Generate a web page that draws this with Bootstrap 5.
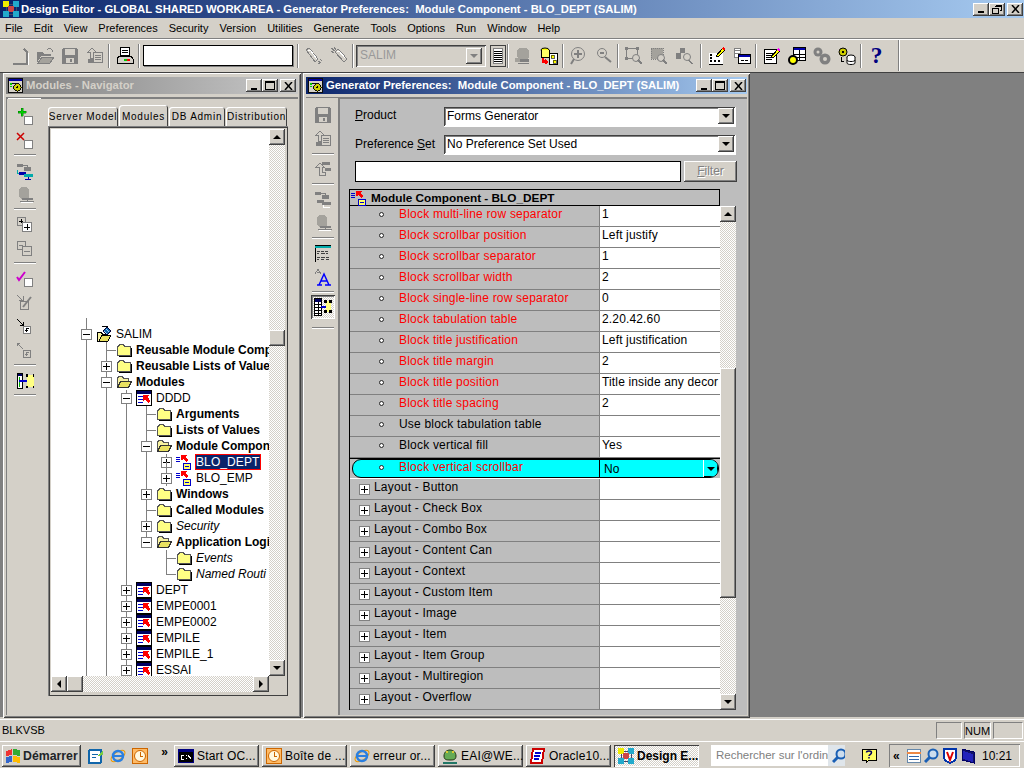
<!DOCTYPE html>
<html lang="en">
<head>
<meta charset="utf-8">
<title>Design Editor</title>
<link href="https://cdn.jsdelivr.net/npm/bootstrap@5.3.0/dist/css/bootstrap.min.css" rel="stylesheet">
<style>
:root{--c:#d4d0c8;--d:#808080;--p:#bdbdbd;--a:"Liberation Sans",sans-serif}
html,body{margin:0;height:768px;width:1024px;overflow:hidden}
body{background:var(--c);font:11.5px/1.2 var(--a);color:#000;display:flex;flex-direction:column}
svg{display:block;flex:none;shape-rendering:crispEdges}
.raised{background:var(--c);box-shadow:inset -1px -1px #404040,inset 1px 1px #fff,inset -2px -2px #808080}
.sunken{background:#fff;box-shadow:inset 1px 1px #404040,inset -1px -1px #fff,inset 2px 2px #808080}
.check{background:repeating-conic-gradient(#fff 0 25%,#d4d0c8 0 50%) 0 0/2px 2px}
.titlebar{height:18px;flex:none;background:linear-gradient(90deg,#0a246a,#a6caf0);color:#fff;font:700 11.3px/18px var(--a);padding-left:3px;gap:2px;white-space:pre}
.wb{width:16px;height:13px;flex:none;display:flex;align-items:center;justify-content:center}
.wbx{margin-left:2px;margin-right:1px}
.w-nav .wbx{margin-right:2px}
.menubar{height:21px;flex:none;border-bottom:1px solid #808080;box-shadow:0 1px #fff;padding-left:5px;font:11px/20px var(--a)}
.menubar span{margin-right:11px}
.toolbar{height:31px;flex:none;margin-top:1px;padding-left:7px;width:899px;border-right:1px solid #808080;box-shadow:1px 0 #fff;align-items:center}
.tb{width:25px;height:24px;flex:none;display:flex;align-items:center;justify-content:center}
.sep{width:2px;height:24px;flex:none;margin:0 2px 0 1px;border-left:1px solid #808080;border-right:1px solid #fff}
.qfield{width:150px;height:21px;margin-left:1px;background:#fff;border:1px solid #000;box-shadow:1px 1px #808080;flex:none}
.combo{width:130px;height:22px;flex:none;padding:3px 4px;font:12px/15px var(--a);color:#999;background:var(--c);box-shadow:inset 1px 1px #404040,inset -1px -1px #fff,inset 2px 2px #808080;display:flex;justify-content:space-between}
.sbtn{width:16px;height:16px;flex:none;display:flex;align-items:center;justify-content:center}
.tri-d{width:0;height:0;border:4px solid transparent;border-top:4px solid #000;border-bottom:0}
.tri-u{width:0;height:0;border:4px solid transparent;border-bottom:4px solid #000;border-top:0}
.tri-l{width:0;height:0;border:4px solid transparent;border-right:4px solid #000;border-left:0}
.tri-r{width:0;height:0;border:4px solid transparent;border-left:4px solid #000;border-right:0}
.tri-g{border-top-color:#808080}
.mdi{flex:1 1 auto;background:var(--d);position:relative;margin-top:1px;border-top:1px solid #404040}
.win{position:absolute;top:0;height:645px;background:var(--c);box-shadow:inset 1px 1px #fff,inset -1px -1px #404040,inset 2px 2px #d4d0c8,inset -2px -2px #808080;padding:4px 3px 3px;display:flex;flex-direction:column}
.w-nav{left:3px;width:298px}
.w-gen{left:303px;width:447px}
.wt{height:17px;flex:none;font:700 11.3px/17px var(--a);white-space:pre;padding-left:2px;gap:3px;margin-bottom:3px}
.wt-in{background:linear-gradient(90deg,#808080,#c8c8c8);color:#d4d0c8}
.wt-ac{background:linear-gradient(90deg,#0a246a,#a6caf0);color:#fff}
.wbody{flex:1 1 auto;display:flex;min-height:0;box-shadow:inset 1px 1px #808080;border-top:1px solid #808080}
.vbar{flex:none;padding-top:8px;display:flex;flex-direction:column;align-items:center;background:var(--c)}
.vbar .vt{height:24px;width:24px;flex:none;display:flex;align-items:center;justify-content:center}
.vsep{height:2px;flex:none;margin:2px 0;width:22px;border-top:1px solid #808080;border-bottom:1px solid #fff}
.nav-vbar{width:33px;padding-top:6px;margin-left:2px;border-right:0;border-top:1px solid #fff}
.nav-vbar .vsep{margin:1px 0 3px}
.navmain{flex:1 1 auto;padding:9px 10px 19px 7px;display:flex;flex-direction:column;min-width:0}
.nav.wtabs{border:0;gap:1px;height:19px;flex:none;flex-wrap:nowrap;padding-left:0}
.wtabs .nav-link{padding:0;height:19px;font:10px/19px var(--a);letter-spacing:.75px;color:#000;background:var(--c);border:0;border-radius:3px 3px 0 0;box-shadow:inset 1px 1px #fff,inset -1px 0 #404040;text-align:center;white-space:nowrap}
.wtabs .nav-link.active{height:21px;margin-top:-2px;line-height:23px;color:#000;background:var(--c);box-shadow:inset 1px 1px #fff,inset -1px 0 #404040}
.pane{flex:1 1 auto;box-shadow:inset 1px 1px #808080,inset -1px -1px #404040,inset 2px 2px #404040;padding:3px 3px 4px 3px;display:grid;grid-template-columns:1fr 16px;grid-template-rows:1fr 16px;min-height:0;background:var(--c)}
.tree{background:#fff;overflow:hidden;padding:197px 0 0 25px;font:12px/16px var(--a);white-space:nowrap}
.tr{height:16px;display:flex;align-items:center}
.c{width:20px;height:16px;flex:none;position:relative}
.c.v::before,.c.t::before,.c.l::before,.c.bx::before,.c.end::before{content:"";position:absolute;left:10px;top:0;bottom:0;width:1px;background:#808080}
.c.t::after,.c.l::after{content:"";position:absolute;left:10px;top:8px;width:10px;height:1px;background:#808080}
.c.l::before{bottom:8px}
.c.top::before{top:-8px}
.c.end::before{bottom:8px}
.c.bx b{position:absolute;left:5px;top:3px;width:11px;height:11px;border:1px solid #808080;background:linear-gradient(#000,#000) center/7px 1px no-repeat #fff}
.c.bx.pl b{background:linear-gradient(#000,#000) center/7px 1px no-repeat,linear-gradient(#000,#000) center/1px 7px no-repeat,#fff}
.ic{width:20px;flex:none;display:flex;justify-content:flex-start}
.fb{font-weight:700}
.fi{font-style:italic}
.hit{background:#0a246a;color:#fff;outline:1px solid #f00;outline-offset:-1px;padding:0 1px;margin-left:-1px;line-height:16px;letter-spacing:.1px}
.vtrack{display:flex;flex-direction:column}
.grow{flex:1 1 auto;min-height:0;min-width:0}
.grow-a{flex-grow:1.7}
.thumb{flex:none}
.htrack{display:flex;grid-column:1}
.genmain{flex:1 1 auto;background:var(--p);padding:9px 9px 6px 10px;display:flex;flex-direction:column;min-width:0;box-shadow:inset 1px 1px #808080}
.genbar{width:33px;box-shadow:inset -1px 0 #808080;padding-top:5px}
.fr{height:19px;align-items:center;margin-bottom:9px;padding-left:6px;flex:none;font:12px/19px var(--a)}
.fr label{width:89px;flex:none;margin-top:-2px}
.fr+.fr label{margin-top:0}
.fsel{width:292px;height:20px;background:#fff;box-shadow:inset 1px 1px #404040,inset -1px -1px #fff,inset 2px 2px #808080;padding:0 1px 0 3px;display:flex;justify-content:space-between;align-items:center;border-right:1px solid #fff;border-bottom:1px solid #fff}
.ffilter{height:21px;flex:none;padding-left:6px;margin-top:-2px;margin-bottom:7px;gap:3px}
.ffilter div{width:326px;background:#fff;border:1px solid #000}
.btn.filter{width:53px;height:21px;padding:0;border:0;border-radius:0;font:12px/21px var(--a);color:#808080;text-shadow:1px 1px #fff;--bs-btn-bg:#d4d0c8}
.grid-h{width:371px;height:17px;flex:none;border:1px solid #000;font:700 11.8px/16px var(--a);gap:4px;padding-left:1px}
.gridwrap{display:flex;flex:1 1 auto;min-height:0}
.grid{width:371px;flex:none;border-left:1px solid #000;font:12px/17px var(--a);letter-spacing:.2px;height:504px;overflow:hidden}
.row-x{height:21px;display:flex;overflow:hidden}
.row-x>.k{width:250px;flex:none;border-bottom:1px solid #808080;border-right:1px solid #808080;padding-left:49px;position:relative;line-height:16px;white-space:nowrap}
.row-x>.val{width:120px;flex:none;background:#fff;border-bottom:1px solid #808080;padding-left:2px;white-space:nowrap;overflow:hidden;line-height:17px;letter-spacing:.15px}
.red{color:#f00}
.dot{position:absolute;left:29px;top:6px;width:5px;height:5px;border-radius:50%;background:#fff;border:1px solid #222}
.row-x>.k.lay{padding-left:24px}
.k .pb{position:absolute;left:9px;top:5px;width:11px;height:11px;border:1px solid #808080;background:linear-gradient(#000,#000) center/7px 1px no-repeat,linear-gradient(#000,#000) center/1px 7px no-repeat,#fff}
.row-x.sel{height:21px;padding:0 1px 1px 2px;border-top:1px solid #000;border-bottom:1px solid #fff}
.pill{flex:1 1 auto;display:flex;background:#0ff;border:1px solid #000;border-radius:9px;overflow:hidden;height:19px}
.pill .k2{width:246px;flex:none;padding-left:46px;position:relative;line-height:14px;white-space:nowrap}
.pill .k2 .dot{left:26px;top:5px}
.pill .v2{flex:1 1 auto;border-left:1px solid #000;padding-left:4px;line-height:19px;display:flex;justify-content:space-between}
.pill .dd{width:15px;height:17px;background:#0ff;box-shadow:inset 1px 0 #fff,inset -1px -1px #000;display:flex;align-items:center;justify-content:center}
.gridbar{width:16px;flex:none;display:flex;flex-direction:column;height:504px}
.gridbar .thumb{height:230px;width:16px}
.g-a{flex-grow:146}
.g-b{flex-grow:96}
.t71{width:70px}.t49{width:49px}.t56{width:56px}.t61{width:61px}
.statusbar{height:22px;flex:none;margin-top:2px;border-top:1px solid #fff;padding:0 1px 0 2px;font:11px/19px var(--a);align-items:center;gap:2px}
.stc{height:17px;border:1px solid #808080;border-right-color:#fff;border-bottom-color:#fff;flex:none;text-align:center;line-height:16px}
.s26{width:26px}.s27{width:27px}.s30{width:30px}
.taskbar{height:27px;flex:none;box-shadow:inset 0 1px #fff;padding:2px 2px 0 2px;align-items:center;font:12px/1 var(--a)}
.start{width:79px;height:22px;flex:none;padding:0 3px;font:700 12.3px/22px var(--a);gap:2px;border:0;border-radius:0;--bs-btn-bg:#d4d0c8}
.ql{width:22px;height:20px;flex:none;display:flex;align-items:center;justify-content:center}
.ql-x{width:23px;font-weight:700;align-items:flex-start;padding-left:4px}
.task{width:85px;height:22px;flex:none;margin-right:3px;padding:0 4px;gap:3px;white-space:nowrap;overflow:hidden;letter-spacing:.2px}
.task.on{font-weight:700;letter-spacing:0;background:repeating-conic-gradient(#fff 0 25%,#d4d0c8 0 50%) 0 0/2px 2px;box-shadow:inset 1px 1px #404040,inset -1px -1px #fff}
.search{width:134px;height:21px;flex:none;background:#fff;margin-left:9px;color:#808080;font:11.5px/21px var(--a);display:flex;justify-content:space-between;padding-left:5px;overflow:hidden;white-space:nowrap}
.search i{width:23px;flex:none;background:#dfe5ea;display:flex;align-items:center;justify-content:center}
.hl{margin-left:13px}
.tray{width:131px;height:23px;flex:none;box-shadow:inset 1px 1px #808080,inset -1px -1px #fff;gap:2px;padding:0 8px 0 4px;margin-left:9px;align-items:center}
.qm{color:#000080;font-family:"Liberation Serif",serif}
</style>
</head>
<body>
<svg width="0" height="0" class="position-absolute">
<defs>
<symbol id="logo" viewBox="0 0 16 16"><path d="M3 3h10v10H3z" fill="none" stroke="#446"/><rect x="0" y="0" width="6" height="6" fill="#ee0"/><rect x="10" y="0" width="6" height="6" fill="#2ac"/><rect x="5" y="5" width="6" height="6" fill="#c44"/><rect x="0" y="10" width="6" height="6" fill="#2ac"/><rect x="10" y="10" width="6" height="6" fill="#2ac"/></symbol>
<symbol id="wgear" viewBox="0 0 16 16"><rect x=".5" y=".5" width="15" height="15" fill="#d4d0c8" stroke="#000"/><rect x="1" y="1" width="14" height="2" fill="#0000a0"/><rect x="2" y="5" width="2" height="2" fill="#0c0"/><rect x="2" y="8" width="2" height="2" fill="#0c0"/><path d="M4 6h4" stroke="#000"/><circle cx="10" cy="10" r="4" fill="#cc0" stroke="#000"/><circle cx="10" cy="10" r="1.2" fill="#000"/></symbol>
<symbol id="fo" viewBox="0 0 16 14"><path d="M1.500 3.500h1l1-2h4l1 2h5.500v9h-12.500z" fill="#ffff84" stroke="#555"/><path d="M15 4.500v9H3" fill="none" stroke="#000"/></symbol>
<symbol id="fopen" viewBox="0 0 16 14"><path d="M1.500 12V3.500l1-2h4l1 2h5v2" fill="#f7f2a0" stroke="#555"/><path d="M1.500 12.500l3-6h11l-3 6z" fill="#e8e060" stroke="#333"/></symbol>
<symbol id="mod" viewBox="0 0 16 16"><rect x=".5" y=".5" width="15" height="15" fill="#fff" stroke="#000"/><rect x="1" y="1" width="14" height="3" fill="#000060"/><path d="M2 6.500h5M2 9.500h5M2 12.500h5" stroke="#00c"/><path d="M7 5h6l-1.500 2 3 4-2.500 2-3-3.500-2 1.500z" fill="#f00"/></symbol>
<symbol id="comp" viewBox="0 0 16 16"><path d="M0 3.500h4M0 5.500h4M0 7.500h4" stroke="#00c"/><path d="M5 1h6l-1.500 2 3 3-2 2-3-3-2 1.500z" fill="#f00"/><rect x="7.500" y="9.500" width="7" height="6" fill="#ff6" stroke="#00c"/><path d="M9 12.500h4" stroke="#00c"/></symbol>
<symbol id="app" viewBox="0 0 16 16"><path d="M1.500 15V6.500h4l1 2h3v6.500z" fill="#f7f2a0" stroke="#000"/><path d="M3 15l3-6h9l-3 6z" fill="#e8e060" stroke="#000"/><path d="M7 5l4-4 4 4-4 4z" fill="#16a" stroke="#003"/><path d="M8 5l3 3M10 3l3 3" stroke="#9cf"/><path d="M6 .500h6" stroke="#000"/></symbol>
<symbol id="arrow-dia" viewBox="0 0 16 16"><rect x="1" y="1" width="5" height="14" fill="#fff" stroke="#000"/><path d="M2 2.500h3" stroke="#000060" stroke-width="2"/><path d="M3 4v9" stroke="#0a0"/><path d="M3 8h7" stroke="#00c"/><rect x="10" y="3" width="6" height="10" fill="#ffff84"/><path d="M9 2h2v2H9zM15 2h2v2h-2zM9 12h2v2H9zM15 12h2v2h-2z" fill="#000"/></symbol>
<symbol id="plus" viewBox="0 0 18 18"><path d="M3 3h2V0h2v3h3v2H7v3H5V5H2V3z" fill="#0c0" stroke="#060" stroke-width=".4"/><rect x="8.500" y="8.500" width="8" height="8" fill="#fff" stroke="#808080"/></symbol>
<symbol id="times" viewBox="0 0 18 18"><path d="M1 1l7 7M8 1L1 8" stroke="#c00" stroke-width="1.500" shape-rendering="auto"/><rect x="8.500" y="8.500" width="8" height="8" fill="#fff" stroke="#808080"/></symbol>
<symbol id="tree2" viewBox="0 0 18 18"><rect x="1" y="2" width="6" height="3" fill="#808080"/><path d="M7 3h4v4" stroke="#808080" fill="none"/><rect x="8" y="5" width="7" height="4" fill="#808080"/><rect x="3" y="10" width="7" height="3" fill="#00a"/><path d="M1 8v3h2" stroke="#0aa" fill="none"/><rect x="8" y="12" width="9" height="3" fill="#0aa"/><path d="M12 15v2h-3h6" stroke="#00a" fill="none"/></symbol>
<symbol id="treeg" viewBox="0 0 18 18"><rect x="1" y="2" width="6" height="3" fill="#808080"/><path d="M7 3h4v4" stroke="#808080" fill="none"/><rect x="8" y="5" width="7" height="4" fill="#808080"/><rect x="3" y="10" width="7" height="3" fill="#808080"/><rect x="8" y="12" width="9" height="3" fill="#808080"/><path d="M9 15v2h7" stroke="#fff" fill="none"/></symbol>
<symbol id="globe" viewBox="0 0 18 18"><path d="M5 1h6l2 3v7l-2 2H5L3 11V4z" fill="#a4a29c"/><rect x="6" y="12" width="11" height="2" fill="#808080"/><path d="M4 15h14M11 14v3" stroke="#808080"/><path d="M5 16h12" stroke="#fff"/></symbol>
<symbol id="boxplus" viewBox="0 0 18 18"><rect x="1.500" y="1.500" width="8" height="8" fill="none" stroke="#808080"/><rect x="6.500" y="6.500" width="9" height="9" fill="#fff" stroke="#808080"/><path d="M8 11h6M11 8v6" stroke="#000"/><path d="M3 5h4M5 3v4" stroke="#000"/></symbol>
<symbol id="boxminus" viewBox="0 0 18 18"><rect x="1.500" y="1.500" width="8" height="8" fill="none" stroke="#808080"/><rect x="6.500" y="6.500" width="9" height="9" fill="#d4d0c8" stroke="#808080"/><path d="M8 11h6" stroke="#808080"/><path d="M3 5h4" stroke="#808080"/></symbol>
<symbol id="check" viewBox="0 0 18 18"><path d="M1 7l2 3 6-8" stroke="#c0c" stroke-width="2" fill="none" shape-rendering="auto"/><rect x="8.500" y="8.500" width="8" height="8" fill="#fff" stroke="#808080"/></symbol>
<symbol id="checkg" viewBox="0 0 18 18"><path d="M1 1l5 5M3 6h4V2" stroke="#808080" fill="none"/><rect x="4.500" y="7.500" width="8" height="8" fill="#d4d0c8" stroke="#808080"/><path d="M7 13l8-10" stroke="#808080" stroke-width="2" shape-rendering="auto"/></symbol>
<symbol id="swin" viewBox="0 0 18 18"><path d="M1 1l6 6M4 7h3V4" stroke="#000" fill="none"/><rect x="7.500" y="8.500" width="7" height="7" fill="#fff" stroke="#808080"/><path d="M12.500 10h-2v4M9 12h3" stroke="#000" fill="none"/></symbol>
<symbol id="swing" viewBox="0 0 18 18"><path d="M7 7L1 1M1 4V1h3" stroke="#808080" fill="none"/><rect x="7.500" y="8.500" width="7" height="7" fill="#d4d0c8" stroke="#808080"/><path d="M12.500 10h-2v4M9 12h3" stroke="#808080" fill="none"/></symbol>
<symbol id="disk" viewBox="0 0 18 18"><path d="M2 1h13l2 2v14H1V2z" fill="#808080"/><rect x="4" y="2" width="10" height="6" fill="#d4d0c8"/><rect x="5" y="11" width="8" height="5" fill="#d4d0c8"/><rect x="9" y="12" width="2" height="3" fill="#808080"/></symbol>
<symbol id="revert" viewBox="0 0 18 18"><path d="M6 1l-4 4h2v6h4V5h2z" fill="#d4d0c8" stroke="#808080"/><rect x="7.500" y="5.500" width="9" height="10" fill="#d4d0c8" stroke="#808080"/><path d="M9 8h6M9 10h6M9 12h6" stroke="#808080"/><path d="M2 12h5v4H2z" fill="#808080"/></symbol>
<symbol id="updn" viewBox="0 0 18 18"><path d="M2 7l4-4 4 4H8v5h3v3H5V7z" fill="#d4d0c8" stroke="#808080"/><rect x="8" y="2" width="8" height="3" fill="#808080"/><rect x="11" y="8" width="6" height="3" fill="#808080"/></symbol>
<symbol id="new" viewBox="0 0 18 18"><path d="M2 17h14V5l-3-3" fill="none" stroke="#808080" stroke-width="1.500"/><path d="M3 18h14V6" fill="none" stroke="#fff"/></symbol>
<symbol id="openg" viewBox="0 0 18 18"><path d="M1 16V5h6l1 2h7v2H5L1 16z" fill="#808080"/><path d="M2 16l4-6h12l-4 6z" fill="#a4a29c" stroke="#808080"/><path d="M11 3c2-2 4-2 5 0l1 2" stroke="#808080" fill="none"/></symbol>
<symbol id="print" viewBox="0 0 18 18"><rect x="4.500" y=".5" width="9" height="8" fill="#fff" stroke="#000"/><path d="M6 3h6M6 5h6" stroke="#000"/><path d="M3 9h12l2 3v4H1v-4z" fill="#d4d0c8" stroke="#000"/><rect x="8" y="12" width="3" height="2" fill="#0c0"/><rect x="11" y="12" width="3" height="2" fill="#f00"/></symbol>
<symbol id="plug" viewBox="0 0 18 18"><path d="M1 3l3-2 9 11-3 3z" fill="#d4d0c8" stroke="#808080"/><path d="M3 4l2-1 7 9" stroke="#fff" fill="none"/><path d="M13 14l3 2M15 12l2 2M13 16l2 1" stroke="#808080"/></symbol>
<symbol id="plug2" viewBox="0 0 18 18"><path d="M5 5l3-3 9 10-3 3z" fill="#d4d0c8" stroke="#808080"/><path d="M7 5l2-1 6 7" stroke="#fff" fill="none"/><path d="M1 1l4 3M4 0l2 3M1 4l3 2" stroke="#808080"/></symbol>
<symbol id="list" viewBox="0 0 16 22"><rect x=".5" y=".5" width="15" height="21" fill="#d4d0c8" stroke="#404040"/><rect x="3.500" y="3.500" width="9" height="15" fill="#fff" stroke="#808080"/><path d="M4 6h8M4 8h8M4 10h8M4 12h8M4 14h8M4 16h8" stroke="#000"/></symbol>
<symbol id="dbg" viewBox="0 0 18 18"><path d="M4 1h8l2 3v6l-2 2H4L2 10V4z" fill="#a4a29c"/><rect x="0" y="11" width="7" height="4" fill="#a4a29c"/><rect x="5" y="12" width="9" height="3" fill="#808080"/><path d="M3 16h11" stroke="#808080"/></symbol>
<symbol id="dbc" viewBox="0 0 18 18"><ellipse cx="5" cy="3" rx="4" ry="2" fill="#ff0" stroke="#000" shape-rendering="auto"/><path d="M1 3v7h8V3" fill="#ff6" stroke="#000"/><path d="M3 11v4h4M5 13l2 2-2 2" stroke="#f00" stroke-width="1.500" fill="none"/><rect x="9.500" y="6.500" width="8" height="11" fill="#fff" stroke="#000"/><rect x="11" y="8" width="3" height="3" fill="#ff0" stroke="#000" stroke-width=".6"/><rect x="13" y="13" width="3" height="3" fill="#ff0" stroke="#000" stroke-width=".6"/></symbol>
<symbol id="zin" viewBox="0 0 18 18"><circle cx="8" cy="7" r="6.500" fill="#d4d0c8" stroke="#808080" shape-rendering="auto"/><path d="M4 7h8M8 3v8" stroke="#808080" stroke-width="2"/><path d="M4 12l-3 5" stroke="#808080" stroke-width="2" shape-rendering="auto"/></symbol>
<symbol id="zout" viewBox="0 0 18 18"><circle cx="7" cy="6" r="4.500" fill="#d4d0c8" stroke="#808080" shape-rendering="auto"/><path d="M5 6h4" stroke="#808080" stroke-width="1.500"/><path d="M10 10l6 5" stroke="#808080" stroke-width="2" shape-rendering="auto"/></symbol>
<symbol id="zbox" viewBox="0 0 18 18"><rect x="1.500" y="1.500" width="11" height="10" fill="none" stroke="#808080"/><path d="M0 0h3v3H0zM11 0h3v3h-3zM0 10h3v3H0z" fill="#808080"/><circle cx="11" cy="11" r="3.500" fill="#d4d0c8" stroke="#808080" shape-rendering="auto"/><path d="M13 13l4 4" stroke="#808080" stroke-width="1.500"/></symbol>
<symbol id="zdot" viewBox="0 0 18 18"><rect x="1" y="1" width="12" height="11" fill="#a4a29c" stroke="#808080" stroke-dasharray="1 1"/><circle cx="11" cy="11" r="3.500" fill="#d4d0c8" stroke="#808080" shape-rendering="auto"/><path d="M13 13l4 4" stroke="#808080" stroke-width="1.500"/></symbol>
<symbol id="zshape" viewBox="0 0 18 18"><rect x="1" y="6" width="5" height="6" fill="#808080"/><rect x="5" y="1" width="5" height="5" fill="#808080"/><circle cx="12" cy="10" r="3.500" fill="#d4d0c8" stroke="#808080" shape-rendering="auto"/><path d="M14 13l3 4" stroke="#808080" stroke-width="1.500"/></symbol>
<symbol id="pen" viewBox="0 0 18 18"><rect x="1.500" y="6.500" width="13" height="10" fill="#fff" stroke="#fff"/><path d="M2 14h2M6 14h2M10 14h2M2 11h2M2 8h2" stroke="#000" stroke-width="2"/><path d="M1 17h14" stroke="#000"/><path d="M8 9l7-8 2 2-7 7z" fill="#ff0" stroke="#000"/><path d="M15 1l2 2" stroke="#f00" stroke-width="2"/></symbol>
<symbol id="tblbox" viewBox="0 0 18 18"><path d="M1 1h6v9H1z" fill="#fff" stroke="#808080"/><path d="M1 3h6M1 6h6" stroke="#808080"/><rect x="5.500" y="7.500" width="12" height="9" fill="#fff" stroke="#000"/><rect x="6" y="8" width="11" height="2" fill="#00a"/><path d="M8 13h3M12 13h3" stroke="#000"/></symbol>
<symbol id="note" viewBox="0 0 18 18"><rect x="1.500" y="2.500" width="12" height="14" fill="#fff" stroke="#000"/><path d="M3 6h8M3 8h8M3 10h8M3 12h6" stroke="#000"/><path d="M8 10l7-8 2 2-7 7z" fill="#ff0" stroke="#000"/><path d="M15 2l2 2" stroke="#f0f" stroke-width="2"/></symbol>
<symbol id="tblring" viewBox="0 0 18 18"><rect x="5.500" y=".5" width="12" height="13" fill="#fff" stroke="#000"/><rect x="6" y="1" width="11" height="2" fill="#00a"/><path d="M6 7h11M6 10h11M11 3v10" stroke="#000"/><circle cx="5" cy="13" r="4" fill="#ff0" stroke="#000" stroke-width="2" shape-rendering="auto"/></symbol>
<symbol id="gears" viewBox="0 0 18 18"><circle cx="5" cy="5" r="4.500" fill="#808080" shape-rendering="auto"/><circle cx="5" cy="5" r="1.500" fill="#d4d0c8" shape-rendering="auto"/><circle cx="12" cy="12" r="5.500" fill="#808080" shape-rendering="auto"/><circle cx="12" cy="12" r="2" fill="#d4d0c8" shape-rendering="auto"/></symbol>
<symbol id="gdb" viewBox="0 0 18 18"><circle cx="5" cy="5" r="4" fill="#cc0" stroke="#000" shape-rendering="auto"/><circle cx="5" cy="5" r="1" fill="#000"/><path d="M3 10v4l3 1" stroke="#000" fill="none"/><ellipse cx="13" cy="10" rx="4" ry="2" fill="#fff" stroke="#000" shape-rendering="auto"/><path d="M9 10v6c0 2 8 2 8 0v-6M9 13c0 2 8 2 8 0" fill="#fff" stroke="#000" shape-rendering="auto"/></symbol>
<symbol id="tblhead" viewBox="0 0 18 18"><path d="M1.500 1v17" stroke="#000"/><rect x="1" y="1" width="16" height="3" fill="#0aa"/><path d="M1 1h16" stroke="#000"/><path d="M3 7h3M7 7h3M11 7h3M3 9h2M7 9h4M12 9h2M3 13h3M7 13h4M12 13h3M3 15h2M7 15h3M12 15h3" stroke="#404040"/></symbol>
<symbol id="fontA" viewBox="0 0 18 18"><path d="M1 6l3-5 3 5M2.500 4h3" stroke="#808080" fill="none"/><path d="M3 17h5M11 17h6M5 17l5-11 5 11M7 13h6" stroke="#00f" stroke-width="1.500" fill="none" shape-rendering="auto"/></symbol>
<symbol id="diag2" viewBox="0 0 18 18"><rect x=".5" y=".5" width="7" height="17" fill="#fff" stroke="#000"/><rect x="1" y="1" width="6" height="3" fill="#000060"/><path d="M1 6h6M1 9h6M1 12h6M1 15h6M4 4v13" stroke="#000"/><path d="M7 9h5" stroke="#00c" stroke-width="2"/><rect x="12" y="3" width="5" height="11" fill="#ffff84"/><path d="M10 2h3v3h-3zM15 2h3v3h-3zM10 12h3v3h-3zM15 12h3v3h-3z" fill="#000"/></symbol>
<symbol id="flag" viewBox="0 0 16 16"><path d="M1 3l6-2v6l-6 1z" fill="#e33"/><path d="M8 1l7 1v6L8 7z" fill="#3a3"/><path d="M1 9l6-1v6l-6 1z" fill="#36c"/><path d="M8 8l7 1v6l-7-1z" fill="#fb0"/></symbol>
<symbol id="ie" viewBox="0 0 16 16"><ellipse cx="8" cy="8" rx="8" ry="4" fill="none" stroke="#e90" transform="rotate(-35 8 8)" shape-rendering="auto"/><circle cx="8" cy="8" r="5" fill="none" stroke="#2a7fe0" stroke-width="2.500" shape-rendering="auto"/><path d="M4 8h9" stroke="#2a7fe0" stroke-width="1.500"/></symbol>
<symbol id="clock" viewBox="0 0 16 16"><rect x=".5" y=".5" width="15" height="15" fill="#fb6" stroke="#c60"/><circle cx="8" cy="8" r="5.500" fill="#fff8e0" stroke="#c60" shape-rendering="auto"/><path d="M8 4v4h3" stroke="#c60" fill="none"/></symbol>
<symbol id="mail" viewBox="0 0 16 16"><rect x="1" y="2" width="12" height="13" rx="1" fill="#fff" stroke="#16a" stroke-width="2"/><path d="M4 6h6M4 9h4" stroke="#16a"/><path d="M10 8l5-6v5z" fill="#7c4"/></symbol>
<symbol id="cmd" viewBox="0 0 16 16"><rect width="16" height="14" y="1" fill="#000080"/><rect x="1" y="4" width="14" height="10" fill="#000"/><path d="M3 7h3M3 11h3M3 7v4" stroke="#fff"/><path d="M8 7v1M8 10v1M10 7l3 4" stroke="#fff"/></symbol>
<symbol id="frog" viewBox="0 0 16 16"><path d="M2 8c0-4 3-6 6-6s6 2 6 6-3 4-6 4-6 0-6-4z" fill="#6a5" stroke="#231" shape-rendering="auto"/><circle cx="5" cy="4" r="1.500" fill="#dc3"/><circle cx="11" cy="4" r="1.500" fill="#dc3"/><path d="M1 14h14v2H1z" fill="#276"/></symbol>
<symbol id="oracle" viewBox="0 0 16 16"><path d="M3 1h11l-2 14H1z" fill="#fff" stroke="#c00" stroke-width="2"/><path d="M5 5h6M4 8h6M4 11h5" stroke="#00c" stroke-width="1.500"/></symbol>
<symbol id="lens" viewBox="0 0 16 16"><circle cx="9" cy="6" r="4.500" fill="#cde" stroke="#1a5fb4" stroke-width="2" shape-rendering="auto"/><path d="M6 9l-5 5" stroke="#1a5fb4" stroke-width="3" shape-rendering="auto"/></symbol>
<symbol id="hlp" viewBox="0 0 16 16"><path d="M1 1h14v11H8l-3 3v-3H1z" fill="#ff6" stroke="#000"/><path d="M5.500 4.500c0-2 5-2 5 0 0 2-2.500 2-2.500 3.500M8 9v1.500" stroke="#006" stroke-width="1.500" fill="none" shape-rendering="auto"/></symbol>
<symbol id="trayNote" viewBox="0 0 16 16"><rect x="1.500" y="1.500" width="13" height="13" fill="#fff" stroke="#68a"/><path d="M1 5h14" stroke="#e84" stroke-width="2"/><path d="M3 8h10M3 11h10" stroke="#36a"/></symbol>
<symbol id="shield" viewBox="0 0 16 16"><path d="M2 1h12v8c0 3-3 5-6 6-3-1-6-3-6-6z" fill="#fff" stroke="#03a" stroke-width="2"/><path d="M5 4l3 8 3-8" stroke="#d00" stroke-width="2" fill="none" shape-rendering="auto"/></symbol>
<symbol id="book" viewBox="0 0 16 16"><path d="M2 1l12 3v11L2 12z" fill="#116" stroke="#006"/><path d="M3 3l10 3v8L3 11z" fill="#22b"/></symbol>
</defs>
</svg>

<div class="titlebar d-flex align-items-center">
  <svg width="16" height="16"><use href="#logo"/></svg>
  <span class="flex-grow-1">Design Editor - GLOBAL SHARED WORKAREA - Generator Preferences:  Module Component - BLO_DEPT (SALIM)</span>
  <div class="d-flex">
    <span class="wb raised"><svg width="8" height="8"><path d="M1 6h6v2H1z"/></svg></span>
    <span class="wb raised"><svg width="10" height="9"><path d="M3.500.5h6v5h-2M.5 3.500h6v5h-6z" fill="none" stroke="#000"/><path d="M3 1h7M0 3h7" stroke="#000"/></svg></span>
    <span class="wb raised wbx"><svg width="9" height="8"><path d="M1 0l7 8M8 0L1 8" stroke="#000" stroke-width="1.500" style="shape-rendering:auto"/></svg></span>
  </div>
</div>

<div class="menubar d-flex">
  <span>File</span><span>Edit</span><span>View</span><span>Preferences</span><span>Security</span><span>Version</span><span>Utilities</span><span>Generate</span><span>Tools</span><span>Options</span><span>Run</span><span>Window</span><span>Help</span>
</div>

<div class="toolbar d-flex">
  <div class="tb"><svg width="18" height="18"><use href="#new"/></svg></div>
  <div class="tb"><svg width="18" height="18"><use href="#openg"/></svg></div>
  <div class="tb"><svg width="18" height="18"><use href="#disk"/></svg></div>
  <div class="tb"><svg width="18" height="18"><use href="#revert"/></svg></div>
  <div class="sep"></div>
  <div class="tb"><svg width="18" height="18"><use href="#print"/></svg></div>
  <div class="sep"></div>
  <div class="qfield"></div>
  <div class="sep ms-1"></div>
  <div class="tb"><svg width="18" height="18"><use href="#plug"/></svg></div>
  <div class="tb"><svg width="18" height="18"><use href="#plug2"/></svg></div>
  <div class="sep"></div>
  <div class="combo"><span>SALIM</span><span class="sbtn raised"><i class="tri-d tri-g"></i></span></div>
  <svg class="ms-1" width="16" height="22"><use href="#list"/></svg>
  <div class="sep"></div>
  <div class="tb"><svg width="18" height="18"><use href="#dbg"/></svg></div>
  <div class="tb"><svg width="18" height="18"><use href="#dbc"/></svg></div>
  <div class="sep"></div>
  <div class="tb"><svg width="18" height="18"><use href="#zin"/></svg></div>
  <div class="tb"><svg width="18" height="18"><use href="#zout"/></svg></div>
  <div class="sep"></div>
  <div class="tb"><svg width="18" height="18"><use href="#zbox"/></svg></div>
  <div class="tb"><svg width="18" height="18"><use href="#zdot"/></svg></div>
  <div class="tb"><svg width="18" height="18"><use href="#zshape"/></svg></div>
  <div class="sep ms-1"></div>
  <div class="tb"><svg width="18" height="18"><use href="#pen"/></svg></div>
  <div class="tb"><svg width="18" height="18"><use href="#tblbox"/></svg></div>
  <div class="sep"></div>
  <div class="tb"><svg width="18" height="18"><use href="#note"/></svg></div>
  <div class="tb"><svg width="18" height="18"><use href="#tblring"/></svg></div>
  <div class="tb"><svg width="18" height="18"><use href="#gears"/></svg></div>
  <div class="tb"><svg width="18" height="18"><use href="#gdb"/></svg></div>
  <div class="sep"></div>
  <div class="tb fw-bold fs-4 qm">?</div>
</div>

<div class="mdi">
  <section class="win w-nav">
    <div class="wt wt-in d-flex align-items-center">
      <svg width="15" height="15"><use href="#wgear"/></svg>
      <span class="flex-grow-1">Modules - Navigator</span>
      <div class="d-flex">
        <span class="wb raised"><svg width="8" height="8"><path d="M1 6h6v2H1z"/></svg></span>
        <span class="wb raised"><svg width="10" height="9"><path d="M.5.5h9v8h-9z" fill="none" stroke="#000"/><path d="M0 1h10" stroke="#000"/></svg></span>
        <span class="wb raised wbx"><svg width="9" height="8"><path d="M1 0l7 8M8 0L1 8" stroke="#000" stroke-width="1.500" style="shape-rendering:auto"/></svg></span>
      </div>
    </div>
    <div class="wbody">
      <div class="vbar nav-vbar">
        <div class="vt"><svg width="18" height="18"><use href="#plus"/></svg></div>
        <div class="vt"><svg width="18" height="18"><use href="#times"/></svg></div>
        <div class="vsep"></div>
        <div class="vt"><svg width="18" height="18"><use href="#tree2"/></svg></div>
        <div class="vt"><svg width="18" height="18"><use href="#globe"/></svg></div>
        <div class="vsep"></div>
        <div class="vt"><svg width="18" height="18"><use href="#boxplus"/></svg></div>
        <div class="vt"><svg width="18" height="18"><use href="#boxminus"/></svg></div>
        <div class="vsep"></div>
        <div class="vt"><svg width="18" height="18"><use href="#check"/></svg></div>
        <div class="vt"><svg width="18" height="18"><use href="#checkg"/></svg></div>
        <div class="vt"><svg width="18" height="18"><use href="#swin"/></svg></div>
        <div class="vt"><svg width="18" height="18"><use href="#swing"/></svg></div>
        <div class="vsep"></div>
        <div class="vt"><svg width="18" height="18"><use href="#arrow-dia"/></svg></div>
        <div class="vsep"></div>
      </div>
      <div class="navmain">
        <ul class="nav wtabs">
          <li class="nav-item"><a class="nav-link t71">Server Model</a></li>
          <li class="nav-item"><a class="nav-link active t49">Modules</a></li>
          <li class="nav-item"><a class="nav-link t56">DB Admin</a></li>
          <li class="nav-item"><a class="nav-link t61">Distribution</a></li>
        </ul>
        <div class="pane">
          <div class="tree">
            <div class="tr"><i class="c bx top"><b></b></i><span class="ic"><svg width="16" height="16"><use href="#app"/></svg></span><span>SALIM</span></div>
            <div class="tr"><i class="c v"></i><i class="c t"></i><span class="ic"><svg width="16" height="14"><use href="#fo"/></svg></span><span class="fb">Reusable Module Comp</span></div>
            <div class="tr"><i class="c v"></i><i class="c bx pl"><b></b></i><span class="ic"><svg width="16" height="14"><use href="#fo"/></svg></span><span class="fb">Reusable Lists of Value</span></div>
            <div class="tr"><i class="c v"></i><i class="c bx"><b></b></i><span class="ic"><svg width="16" height="14"><use href="#fopen"/></svg></span><span class="fb">Modules</span></div>
            <div class="tr"><i class="c v"></i><i class="c v"></i><i class="c bx"><b></b></i><span class="ic"><svg width="16" height="16"><use href="#mod"/></svg></span><span>DDDD</span></div>
            <div class="tr"><i class="c v"></i><i class="c v"></i><i class="c v"></i><i class="c t"></i><span class="ic"><svg width="16" height="14"><use href="#fo"/></svg></span><span class="fb">Arguments</span></div>
            <div class="tr"><i class="c v"></i><i class="c v"></i><i class="c v"></i><i class="c t"></i><span class="ic"><svg width="16" height="14"><use href="#fo"/></svg></span><span class="fb">Lists of Values</span></div>
            <div class="tr"><i class="c v"></i><i class="c v"></i><i class="c v"></i><i class="c bx"><b></b></i><span class="ic"><svg width="16" height="14"><use href="#fopen"/></svg></span><span class="fb">Module Compone</span></div>
            <div class="tr"><i class="c v"></i><i class="c v"></i><i class="c v"></i><i class="c v"></i><i class="c bx pl"><b></b></i><span class="ic"><svg width="16" height="16"><use href="#comp"/></svg></span><span class="hit">BLO_DEPT</span></div>
            <div class="tr"><i class="c v"></i><i class="c v"></i><i class="c v"></i><i class="c v"></i><i class="c bx pl top"><b></b></i><span class="ic"><svg width="16" height="16"><use href="#comp"/></svg></span><span>BLO_EMP</span></div>
            <div class="tr"><i class="c v"></i><i class="c v"></i><i class="c v"></i><i class="c bx pl"><b></b></i><span class="ic"><svg width="16" height="14"><use href="#fo"/></svg></span><span class="fb">Windows</span></div>
            <div class="tr"><i class="c v"></i><i class="c v"></i><i class="c v"></i><i class="c t"></i><span class="ic"><svg width="16" height="14"><use href="#fo"/></svg></span><span class="fb">Called Modules</span></div>
            <div class="tr"><i class="c v"></i><i class="c v"></i><i class="c v"></i><i class="c bx pl"><b></b></i><span class="ic"><svg width="16" height="14"><use href="#fo"/></svg></span><span class="fi">Security</span></div>
            <div class="tr"><i class="c v"></i><i class="c v"></i><i class="c v"></i><i class="c bx end"><b></b></i><span class="ic"><svg width="16" height="14"><use href="#fopen"/></svg></span><span class="fb">Application Logi</span></div>
            <div class="tr"><i class="c v"></i><i class="c v"></i><i class="c v"></i><i class="c"></i><i class="c t"></i><span class="ic"><svg width="16" height="14"><use href="#fo"/></svg></span><span class="fi">Events</span></div>
            <div class="tr"><i class="c v"></i><i class="c v"></i><i class="c v"></i><i class="c"></i><i class="c l"></i><span class="ic"><svg width="16" height="14"><use href="#fo"/></svg></span><span class="fi">Named Routi</span></div>
            <div class="tr"><i class="c v"></i><i class="c v"></i><i class="c bx pl"><b></b></i><span class="ic"><svg width="16" height="16"><use href="#mod"/></svg></span><span>DEPT</span></div>
            <div class="tr"><i class="c v"></i><i class="c v"></i><i class="c bx pl"><b></b></i><span class="ic"><svg width="16" height="16"><use href="#mod"/></svg></span><span>EMPE0001</span></div>
            <div class="tr"><i class="c v"></i><i class="c v"></i><i class="c bx pl"><b></b></i><span class="ic"><svg width="16" height="16"><use href="#mod"/></svg></span><span>EMPE0002</span></div>
            <div class="tr"><i class="c v"></i><i class="c v"></i><i class="c bx pl"><b></b></i><span class="ic"><svg width="16" height="16"><use href="#mod"/></svg></span><span>EMPILE</span></div>
            <div class="tr"><i class="c v"></i><i class="c v"></i><i class="c bx pl"><b></b></i><span class="ic"><svg width="16" height="16"><use href="#mod"/></svg></span><span>EMPILE_1</span></div>
            <div class="tr"><i class="c v"></i><i class="c v"></i><i class="c bx pl"><b></b></i><span class="ic"><svg width="16" height="16"><use href="#mod"/></svg></span><span>ESSAI</span></div>
          </div>
          <div class="vtrack check">
            <div class="sbtn raised"><i class="tri-u"></i></div>
            <div class="grow"></div>
            <div class="sbtn raised thumb"></div>
            <div class="grow grow-a"></div>
            <div class="sbtn raised"><i class="tri-d"></i></div>
          </div>
          <div class="htrack check">
            <div class="sbtn raised"><i class="tri-l"></i></div>
            <div class="sbtn raised"></div>
            <div class="grow"></div>
            <div class="sbtn raised"><i class="tri-r"></i></div>
          </div>
        </div>
      </div>
    </div>
  </section>

  <section class="win w-gen">
    <div class="wt wt-ac d-flex align-items-center">
      <svg width="15" height="15"><use href="#wgear"/></svg>
      <span class="flex-grow-1">Generator Preferences:  Module Component - BLO_DEPT (SALIM)</span>
      <div class="d-flex">
        <span class="wb raised"><svg width="8" height="8"><path d="M1 6h6v2H1z"/></svg></span>
        <span class="wb raised"><svg width="10" height="9"><path d="M.5.5h9v8h-9z" fill="none" stroke="#000"/><path d="M0 1h10" stroke="#000"/></svg></span>
        <span class="wb raised wbx"><svg width="9" height="8"><path d="M1 0l7 8M8 0L1 8" stroke="#000" stroke-width="1.500" style="shape-rendering:auto"/></svg></span>
      </div>
    </div>
    <div class="wbody">
      <div class="vbar genbar">
        <div class="vt"><svg width="18" height="18"><use href="#disk"/></svg></div>
        <div class="vt"><svg width="18" height="18"><use href="#revert"/></svg></div>
        <div class="vsep"></div>
        <div class="vt"><svg width="18" height="18"><use href="#updn"/></svg></div>
        <div class="vsep"></div>
        <div class="vt"><svg width="18" height="18"><use href="#treeg"/></svg></div>
        <div class="vt"><svg width="18" height="18"><use href="#globe"/></svg></div>
        <div class="vsep"></div>
        <div class="vt"><svg width="18" height="18"><use href="#tblhead"/></svg></div>
        <div class="vt"><svg width="18" height="18"><use href="#fontA"/></svg></div>
        <div class="vsep"></div>
        <div class="vt check sunken"><svg width="18" height="18"><use href="#diag2"/></svg></div>
        <div class="vsep mt-2"></div>
      </div>
      <div class="genmain">
        <div class="fr d-flex"><label><u>P</u>roduct</label><div class="fsel"><span>Forms Generator</span><span class="sbtn raised"><i class="tri-d"></i></span></div></div>
        <div class="fr d-flex"><label>Preference <u>S</u>et</label><div class="fsel"><span>No Preference Set Used</span><span class="sbtn raised"><i class="tri-d"></i></span></div></div>
        <div class="ffilter d-flex"><div></div><button class="btn filter raised" type="button"><u>F</u>ilter</button></div>
        <div class="grid-h d-flex align-items-center"><svg width="16" height="16"><use href="#comp"/></svg><span>Module Component - BLO_DEPT</span></div>
        <div class="gridwrap">
          <div class="grid">
            <div class="row-x"><div class="k red"><i class="dot"></i>Block multi-line row separator</div><div class="val">1</div></div>
            <div class="row-x"><div class="k red"><i class="dot"></i>Block scrollbar position</div><div class="val">Left justify</div></div>
            <div class="row-x"><div class="k red"><i class="dot"></i>Block scrollbar separator</div><div class="val">1</div></div>
            <div class="row-x"><div class="k red"><i class="dot"></i>Block scrollbar width</div><div class="val">2</div></div>
            <div class="row-x"><div class="k red"><i class="dot"></i>Block single-line row separator</div><div class="val">0</div></div>
            <div class="row-x"><div class="k red"><i class="dot"></i>Block tabulation table</div><div class="val">2.20.42.60</div></div>
            <div class="row-x"><div class="k red"><i class="dot"></i>Block title justification</div><div class="val">Left justification</div></div>
            <div class="row-x"><div class="k red"><i class="dot"></i>Block title margin</div><div class="val">2</div></div>
            <div class="row-x"><div class="k red"><i class="dot"></i>Block title position</div><div class="val">Title inside any decor</div></div>
            <div class="row-x"><div class="k red"><i class="dot"></i>Block title spacing</div><div class="val">2</div></div>
            <div class="row-x"><div class="k"><i class="dot"></i>Use block tabulation table</div><div class="val"></div></div>
            <div class="row-x"><div class="k"><i class="dot"></i>Block vertical fill</div><div class="val">Yes</div></div>
            <div class="row-x sel"><div class="pill"><div class="k2 red"><i class="dot"></i>Block vertical scrollbar</div><div class="v2"><span>No</span><span class="dd"><i class="tri-d"></i></span></div></div></div>
            <div class="row-x"><div class="k lay"><i class="pb"></i>Layout - Button</div><div class="val"></div></div>
            <div class="row-x"><div class="k lay"><i class="pb"></i>Layout - Check Box</div><div class="val"></div></div>
            <div class="row-x"><div class="k lay"><i class="pb"></i>Layout - Combo Box</div><div class="val"></div></div>
            <div class="row-x"><div class="k lay"><i class="pb"></i>Layout - Content Can</div><div class="val"></div></div>
            <div class="row-x"><div class="k lay"><i class="pb"></i>Layout - Context</div><div class="val"></div></div>
            <div class="row-x"><div class="k lay"><i class="pb"></i>Layout - Custom Item</div><div class="val"></div></div>
            <div class="row-x"><div class="k lay"><i class="pb"></i>Layout - Image</div><div class="val"></div></div>
            <div class="row-x"><div class="k lay"><i class="pb"></i>Layout - Item</div><div class="val"></div></div>
            <div class="row-x"><div class="k lay"><i class="pb"></i>Layout - Item Group</div><div class="val"></div></div>
            <div class="row-x"><div class="k lay"><i class="pb"></i>Layout - Multiregion</div><div class="val"></div></div>
            <div class="row-x"><div class="k lay"><i class="pb"></i>Layout - Overflow</div><div class="val"></div></div>
          </div>
          <div class="gridbar check">
            <div class="sbtn raised"><i class="tri-u"></i></div>
            <div class="grow g-a"></div>
            <div class="raised thumb"></div>
            <div class="grow g-b"></div>
            <div class="sbtn raised"><i class="tri-d"></i></div>
          </div>
        </div>
      </div>
    </div>
  </section>
</div>

<div class="statusbar d-flex">
  <span class="flex-grow-1">BLKVSB</span>
  <span class="stc s26"></span>
  <span class="stc s27">NUM</span>
  <span class="stc s30"></span>
</div>

<div class="taskbar d-flex">
  <button class="btn start raised d-flex align-items-center" type="button"><svg width="16" height="16"><use href="#flag"/></svg>Démarrer</button>
  <span class="ql ms-1"><svg width="16" height="16"><use href="#mail"/></svg></span>
  <span class="ql"><svg width="16" height="16"><use href="#ie"/></svg></span>
  <span class="ql"><svg width="16" height="16"><use href="#clock"/></svg></span>
  <span class="ql ql-x">»</span>
  <div class="task raised d-flex align-items-center"><svg width="16" height="16"><use href="#cmd"/></svg>Start OC...</div>
  <div class="task raised d-flex align-items-center"><svg width="16" height="16"><use href="#clock"/></svg>Boîte de ...</div>
  <div class="task raised d-flex align-items-center"><svg width="16" height="16"><use href="#ie"/></svg>erreur or...</div>
  <div class="task raised d-flex align-items-center"><svg width="16" height="16"><use href="#frog"/></svg>EAI@WE...</div>
  <div class="task raised d-flex align-items-center"><svg width="16" height="16"><use href="#oracle"/></svg>Oracle10...</div>
  <div class="task on d-flex align-items-center"><svg width="16" height="16"><use href="#logo"/></svg>Design E...</div>
  <div class="search"><span>Rechercher sur l'ordin</span><i><svg width="16" height="16"><use href="#lens"/></svg></i></div>
  <span class="ql hl"><svg width="16" height="16"><use href="#hlp"/></svg></span>
  <div class="tray d-flex">
    <span class="fw-bold me-1">«</span>
    <svg width="16" height="16"><use href="#trayNote"/></svg>
    <svg width="16" height="16"><use href="#lens"/></svg>
    <svg width="16" height="16"><use href="#shield"/></svg>
    <svg width="16" height="16"><use href="#book"/></svg>
    <span class="ms-auto">10:21</span>
  </div>
</div>
</body>
</html>
